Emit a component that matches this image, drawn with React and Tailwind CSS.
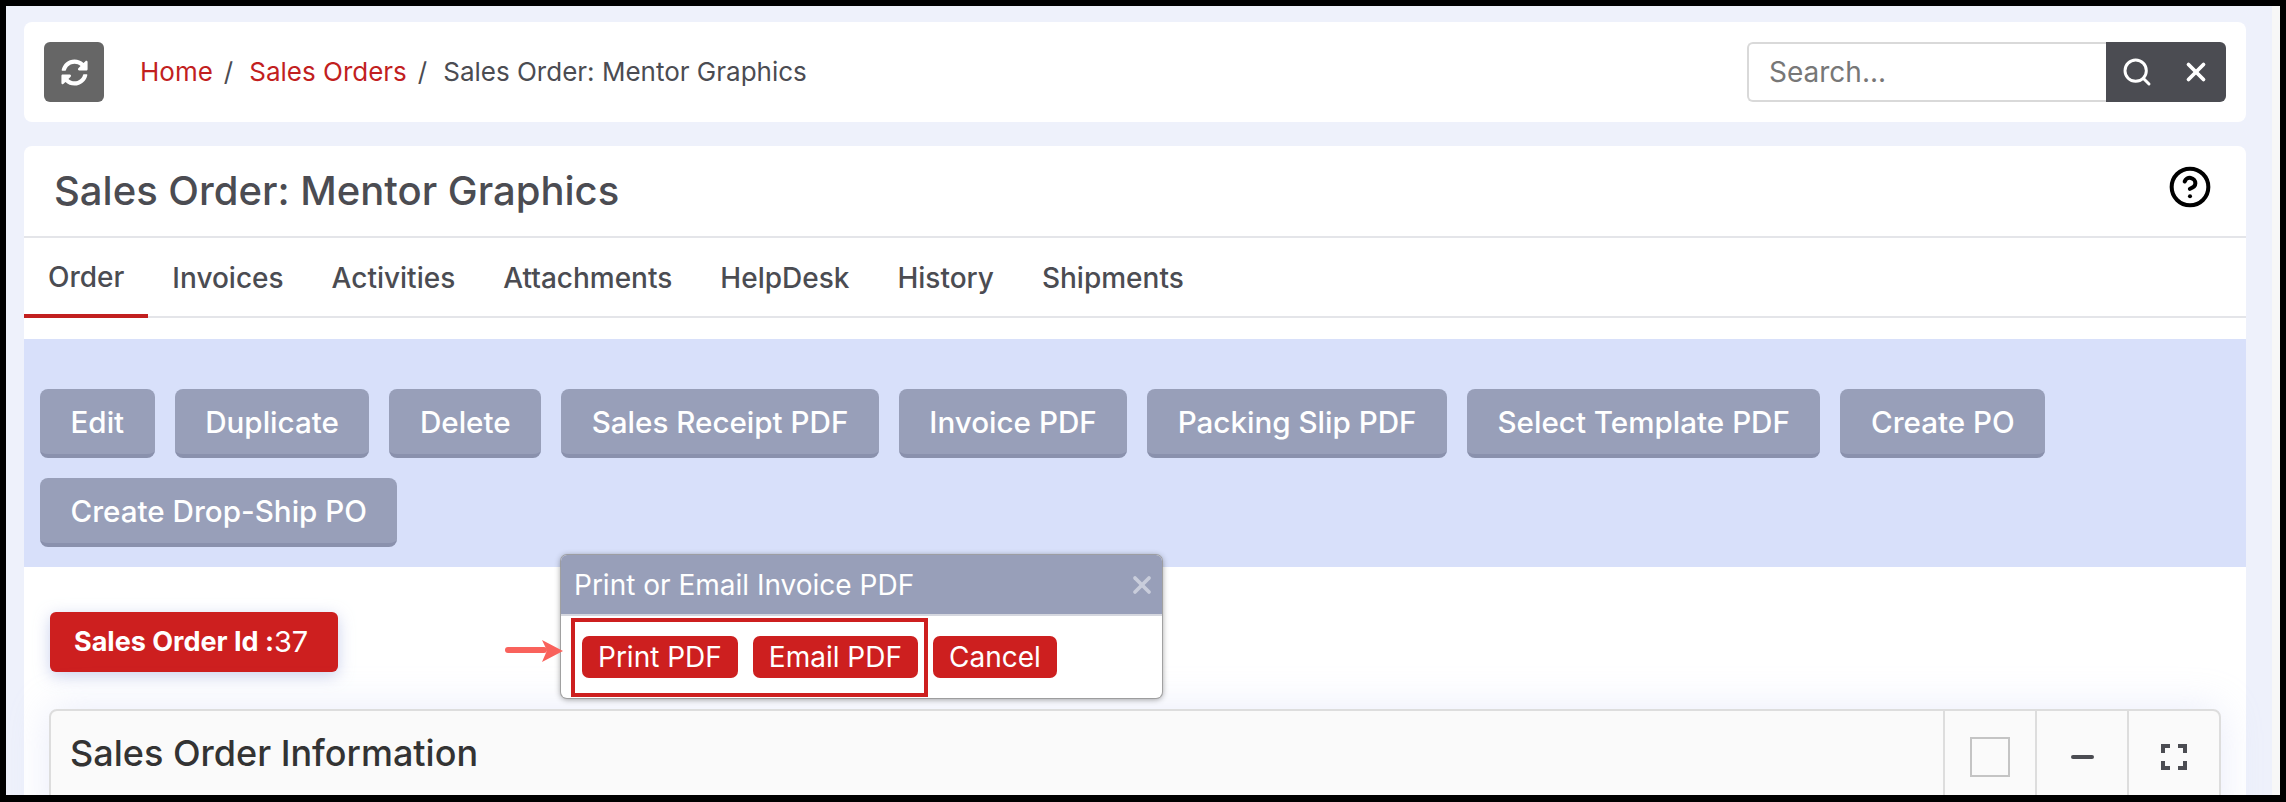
import { FaSyncAlt } from 'react-icons/fa'
import { Search, CircleHelp, X } from 'lucide-react'

const tabs = ['Order', 'Invoices', 'Activities', 'Attachments', 'HelpDesk', 'History', 'Shipments']
const actions = ['Edit', 'Duplicate', 'Delete', 'Sales Receipt PDF', 'Invoice PDF', 'Packing Slip PDF', 'Select Template PDF', 'Create PO', 'Create Drop-Ship PO']

function PdfButton({ children }) {
  return (
    <button className="h-[42px] rounded-[7px] bg-[#cd1f1f] px-4 text-[28px] leading-none font-normal text-white">
      {children}
    </button>
  )
}

function PdfPopup() {
  return (
    <div className="absolute top-[555px] left-[561px] h-[143px] w-[601px] rounded-md bg-white shadow-[0_0_0_1px_rgba(150,150,150,0.8),0_1px_6px_rgba(0,0,0,0.45)]">
      <div className="flex h-[61px] items-center justify-between rounded-t-md border-b-2 border-[#d5d7df] bg-[#989fb9] pr-[6px] pl-[13px] text-[28px] text-white">
        <span>Print or Email Invoice PDF</span>
        <X className="h-[28px] w-[28px] text-[#c9cddb]" strokeWidth={3.2} />
      </div>
      <div className="flex gap-[15px] pt-[20px] pl-[21px]">
        <PdfButton>Print PDF</PdfButton>
        <PdfButton>Email PDF</PdfButton>
        <PdfButton>Cancel</PdfButton>
      </div>
      {/* annotation box */}
      <div className="absolute top-[63px] left-[10px] h-[79px] w-[357px] border-[4px] border-[#cd1f1f]" />
    </div>
  )
}

export default function App() {
  return (
    <div className="relative h-screen overflow-hidden bg-black pt-[6px] pr-[6px] pb-[7px] pl-[6px] font-['Inter',sans-serif] text-[#4b4c52]">
      <div className="flex h-full">
        <main className="min-w-0 flex-1 overflow-hidden bg-[#eef1fb] pt-4 pr-[26px] pl-[18px]">
          {/* breadcrumb bar */}
          <div className="flex h-[100px] items-center justify-between rounded-lg bg-white pr-[20px] pl-[20px]">
            <div className="flex items-center">
              <button className="flex h-[60px] w-[60px] items-center justify-center rounded-md bg-[#666666] text-white">
                <FaSyncAlt className="h-[27px] w-[27px]" />
              </button>
              <div className="ml-[36px] -mt-[2px] flex text-[26px]">
                <span className="text-[#c21f1f]">Home</span>
                <span className="mr-[16px] ml-[11px]">/</span>
                <span className="text-[#c21f1f]">Sales Orders</span>
                <span className="mr-[16px] ml-[11px]">/</span>
                <span>Sales Order: Mentor Graphics</span>
              </div>
            </div>
            <div className="flex h-[60px]">
              <div className="flex w-[359px] items-center rounded-l-md border-2 border-r-0 border-[#d9d9d9] bg-white pl-[20px] text-[28px] text-[#777777]">
                Search...
              </div>
              <div className="flex w-[120px] items-center rounded-r-md bg-[#4b4c52] pl-[15px] text-white">
                <Search className="h-[32px] w-[32px]" strokeWidth={2.2} />
                <X className="ml-[28px] h-[30px] w-[30px]" strokeWidth={3} />
              </div>
            </div>
          </div>

          {/* order card */}
          <div className="mt-6 h-[700px] rounded-t-lg bg-white">
            <div className="flex h-[90px] items-center justify-between pr-[34px] pl-[30px]">
              <h1 className="text-[40px] font-medium">Sales Order: Mentor Graphics</h1>
              <CircleHelp className="-mt-[8px] h-[44px] w-[44px] text-black" strokeWidth={2.2} />
            </div>
            <div className="flex h-[82px] border-t-2 border-b-2 border-[#e4e5e9]">
              {tabs.map((tab, i) => (
                <div key={tab} className={`flex items-center px-6 pt-[2px] text-[28px] font-medium ${i === 0 ? '-mb-[2px] border-b-4 border-[#c21f1f]' : ''}`}>
                  {tab}
                </div>
              ))}
            </div>

            <div className="mt-[21px] flex flex-wrap gap-x-[20px] gap-y-[20px] bg-[#d8e0fa] px-4 pt-[50px] pb-[20px]">
              {actions.map((label) => (
                <button key={label} className="h-[69px] rounded-lg border-b-4 border-[#8a91ad] bg-[#989fb9] px-[30.5px] pt-[2px] text-[29.6px] leading-none font-medium text-white">
                  {label}
                </button>
              ))}
            </div>

            <div className="px-[25px] pt-[45px]">
              <div className="ml-[1px] flex h-[60px] w-[288px] items-center rounded-md bg-[#cd1f1f] pl-[24px] text-[29px] text-white shadow-[0_4px_16px_rgba(180,190,230,0.7)]">
                <span className="text-[27px] font-bold">Sales Order Id :</span>37
              </div>
              <div className="mt-[37px] flex h-[120px] rounded-t-lg border-2 border-[#dddddd] bg-[#fafafa] shadow-[0_0_40px_rgba(180,190,240,0.3)]">
                <div className="flex-1 pt-[15px] pl-[19px] text-[36px] font-medium text-[#333333]">Sales Order Information</div>
                <div className="flex w-[92px] justify-center border-l-2 border-[#dddddd] pt-[26px]">
                  <div className="h-[40px] w-[40px] border-2 border-[#c4c4c4]" />
                </div>
                <div className="flex w-[92px] justify-center border-l-2 border-[#dddddd] pt-[44px]">
                  <div className="h-[4px] w-[23px] rounded-full bg-[#4b4c52]" />
                </div>
                <div className="flex w-[92px] justify-center border-l-2 border-[#dddddd] pt-[33px]">
                  <svg className="h-[26px] w-[26px]" viewBox="0 0 26 26" fill="none" stroke="#4b4c52" strokeWidth="4">
                    <path d="M2 9V2h7M17 2h7v7M24 17v7h-7M9 24H2v-7" />
                  </svg>
                </div>
              </div>
            </div>
          </div>
        </main>
        <div className="w-2 bg-[#f7f7f7]" />
      </div>

      <PdfPopup />

      {/* annotation arrow */}
      <svg className="absolute top-[638px] left-[505px] h-[26px] w-[60px]" viewBox="0 0 60 26">
        <path d="M3 12h36" stroke="#f9625c" strokeWidth="6" strokeLinecap="round" />
        <path d="M37 2l21 11-21 11 5-11.5z" fill="#f9625c" />
      </svg>
    </div>
  )
}
